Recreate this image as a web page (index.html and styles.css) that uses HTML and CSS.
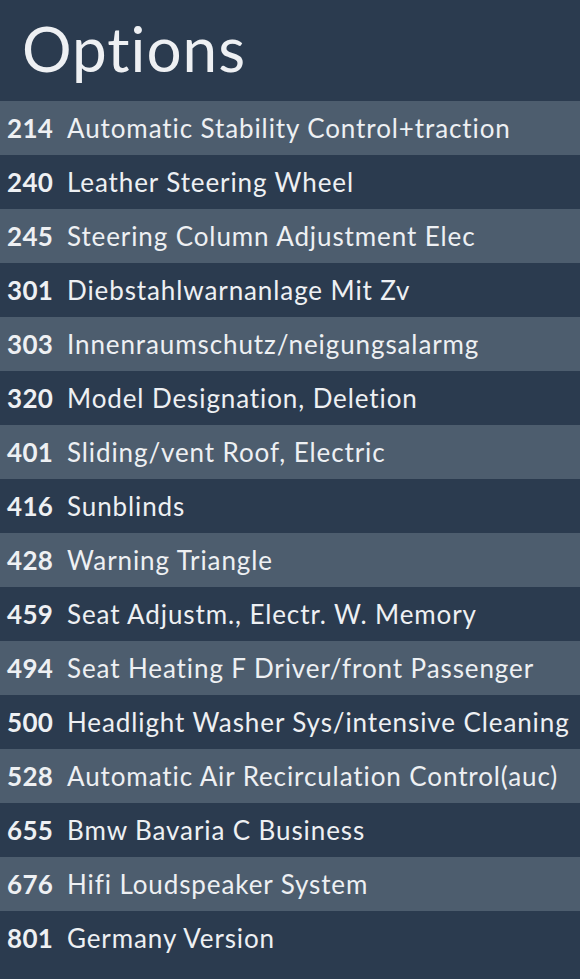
FILE: index.html
```html
<!DOCTYPE html>
<html lang="en">
<head>
  <meta charset="UTF-8">
  <meta name="viewport" content="width=device-width, initial-scale=1.0">
  <title>Options</title>
  <link rel="stylesheet" href="styles.css">
</head>
<body>

  <div class="header">
    <h1>Options</h1>
  </div>

  <ul class="options">
    <li><span class="code">214</span>Automatic Stability Control+traction</li>
    <li><span class="code">240</span>Leather Steering Wheel</li>
    <li><span class="code">245</span>Steering Column Adjustment Elec</li>
    <li><span class="code">301</span>Diebstahlwarnanlage Mit Zv</li>
    <li><span class="code">303</span>Innenraumschutz/neigungsalarmg</li>
    <li><span class="code">320</span>Model Designation, Deletion</li>
    <li><span class="code">401</span>Sliding/vent Roof, Electric</li>
    <li><span class="code">416</span>Sunblinds</li>
    <li><span class="code">428</span>Warning Triangle</li>
    <li><span class="code">459</span>Seat Adjustm., Electr. W. Memory</li>
    <li><span class="code">494</span>Seat Heating F Driver/front Passenger</li>
    <li><span class="code">500</span>Headlight Washer Sys/intensive Cleaning</li>
    <li><span class="code">528</span>Automatic Air Recirculation Control(auc)</li>
    <li><span class="code">655</span>Bmw Bavaria C Business</li>
    <li><span class="code">676</span>Hifi Loudspeaker System</li>
    <li><span class="code">801</span>Germany Version</li>
  </ul>

</body>
</html>
```

FILE: styles.css
```css
body {
  margin: 0;
  padding: 0;
  font-family: Lato, 'Open Sans', sans-serif;
  font-variant-ligatures: none;
  background-color: #2b3b4f;
  color: #eef0f3;
  min-height: 979px;
}

.header {
  height: 101px;
  display: flex;
  align-items: center;
  padding-left: 22px;
}

.header h1 {
  margin: 0;
  font-size: 62px;
  font-weight: normal;
  line-height: 1;
  letter-spacing: 1px;
  margin-top: -6px;
}

.options {
  list-style: none;
  margin: 0;
  padding: 0;
}

.options li {
  height: 54px;
  display: flex;
  align-items: center;
  padding-left: 7px;
  font-size: 26px;
  letter-spacing: 0.9px;
  white-space: nowrap;
}

.options li:nth-child(odd) {
  background-color: #4d5d6e;
}

.code {
  width: 60px;
  font-weight: bold;
  letter-spacing: 0.3px;
}
```
